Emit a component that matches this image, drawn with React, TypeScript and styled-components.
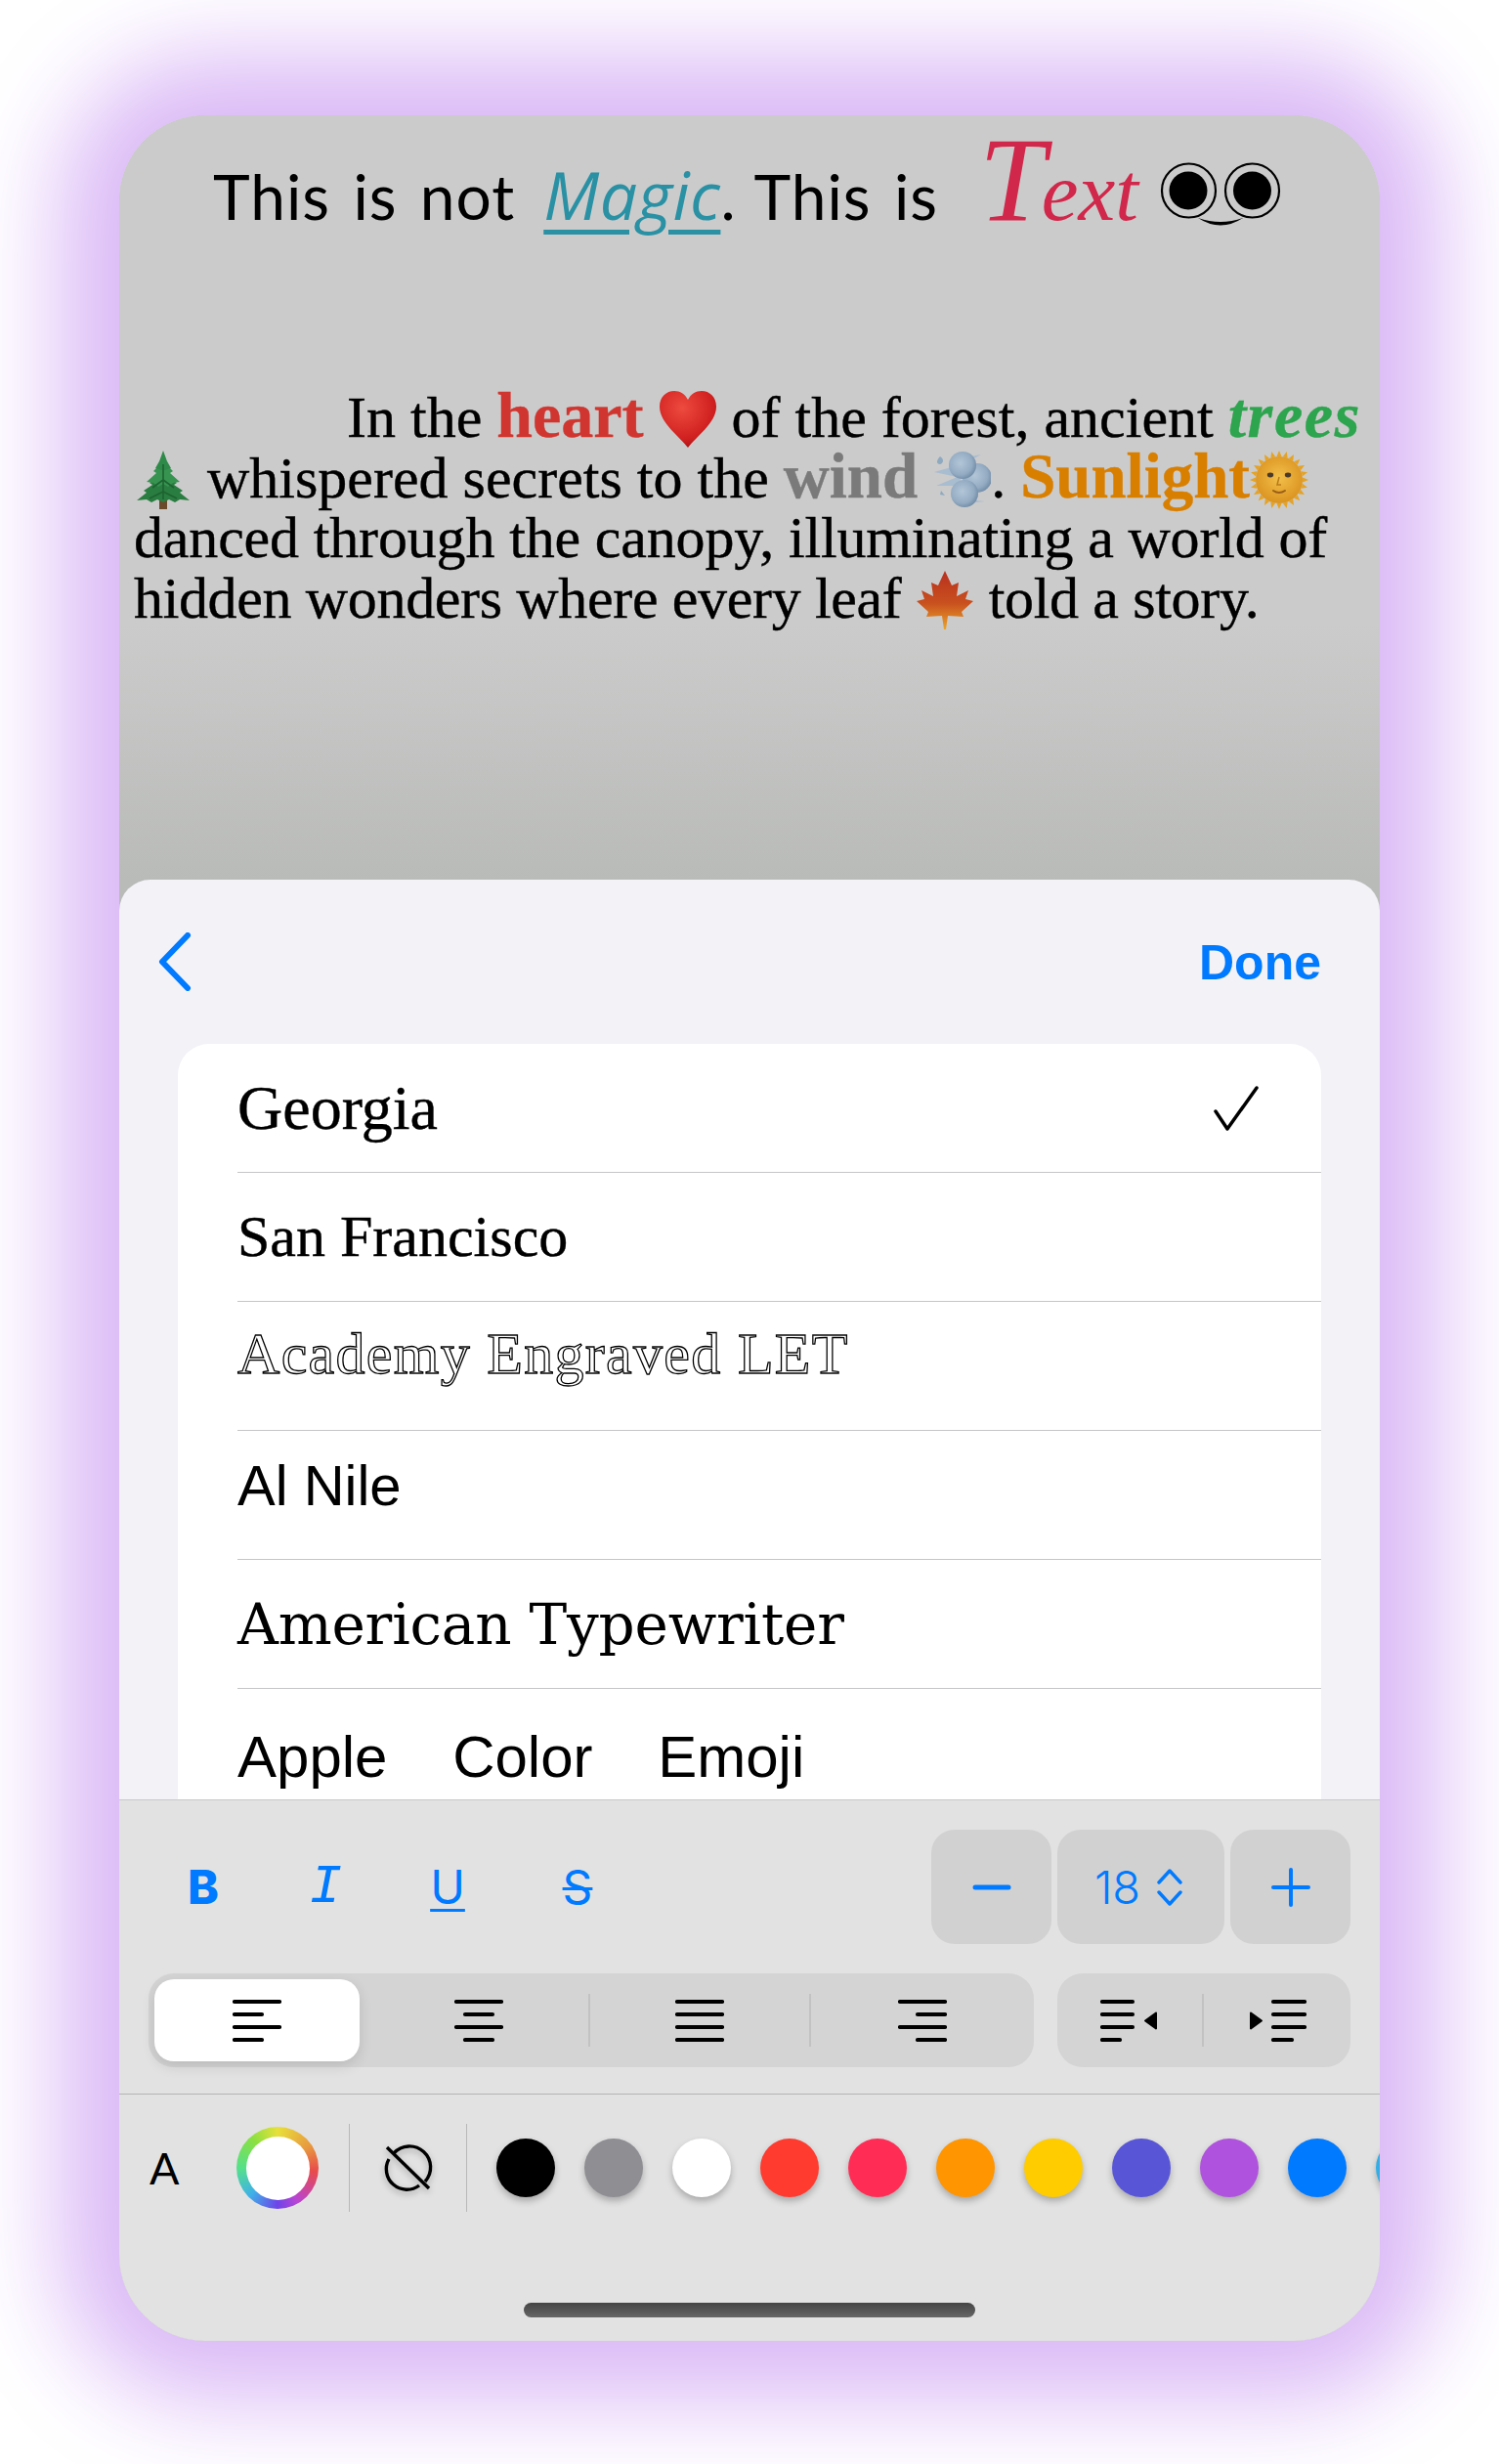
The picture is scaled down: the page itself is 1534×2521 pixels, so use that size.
import React from 'react';
import styled, { createGlobalStyle } from 'styled-components';

const GlobalStyle = createGlobalStyle`
    html, body {
        margin: 0;
        padding: 0;
        background: #ffffff;
        font-family: "Liberation Sans", Arial, sans-serif;
    }
`;

const Page = styled.div`
    width: 1534px;
    height: 2521px;
    padding: 118px 122px 0;
    box-sizing: border-box;
    overflow: hidden;
    background: #ffffff;
`;

const Phone = styled.div`
    width: 1290px;
    height: 2277px;
    border-radius: 88px;
    box-shadow: 0 0 100px 60px #dab8f6;
    display: flex;
    flex-direction: column;
`;

const Clip = styled.div`
    height: 100%;
    border-radius: 88px;
    overflow: hidden;
    background: #b9bbb8;
    display: flex;
    flex-direction: column;
`;

const Canvas = styled.div`
    height: 782px;
    flex-shrink: 0;
    box-sizing: border-box;
    padding-top: 27px;
    background: linear-gradient(180deg, #cbcbcb 0, #cbcbcb 520px, #b9bbb8 782px);
`;

const Title = styled.div`
    height: 252px;
    margin-left: 96px;
    display: flex;
    align-items: baseline;
    white-space: nowrap;
    font-family: Lato, "Liberation Sans", sans-serif;
    font-size: 64px;
    line-height: 78px;
    letter-spacing: 1px;
    word-spacing: 6px;
    color: #000000;
`;

const MagicWord = styled.span`
    margin-left: 29px;
    font-family: "Open Sans", sans-serif;
    font-style: italic;
    font-weight: 400;
    font-size: 68px;
    letter-spacing: 0.5px;
    color: #2a91a5;
    text-decoration: underline;
    text-decoration-thickness: 5px;
    text-underline-offset: 10px;
`;

const Dot = styled.span`
    margin-right: 18px;
`;

const FancyWord = styled.span`
    margin-left: 42px;
    font-family: "Liberation Serif", serif;
    font-style: italic;
    font-size: 85px;
    letter-spacing: 0;
    color: #d0274a;
`;

const FancyCap = styled.span`
    font-size: 122px;
    line-height: 78px;
    margin-right: -4px;
`;

const Eyes = styled.svg`
    width: 124px;
    height: 68px;
    margin-left: 22px;
    align-self: flex-start;
    margin-top: 21px;
`;

const Story = styled.div`
    font-family: "Liberation Serif", serif;
    font-size: 60px;
    -webkit-text-stroke-width: 0.4px;
    color: #000000;
    margin-left: 15px;
`;

const StoryLine = styled.div<{ $indent?: number; $spacing?: number }>`
    height: 61.5px;
    line-height: 61px;
    white-space: nowrap;
    padding-left: ${(p) => p.$indent ?? 0}px;
    letter-spacing: ${(p) => p.$spacing ?? 0}px;
`;

const Highlight = styled.b<{ $color: string; $size: number }>`
    color: ${(p) => p.$color};
    font-size: ${(p) => p.$size}px;
    line-height: 0;
`;

const TreesWord = styled(Highlight)`
    font-style: italic;
    letter-spacing: 1.6px;
`;

const Emoji = styled.svg`
    width: 60px;
    height: 60px;
    vertical-align: -12px;
`;

const Sheet = styled.div`
    height: 941px;
    flex-shrink: 0;
    overflow: hidden;
    background: #f2f2f7;
    border-radius: 32px 32px 0 0;
`;

const SheetHeader = styled.div`
    height: 168px;
    box-sizing: border-box;
    padding: 54px 60px 0 38px;
    display: flex;
    justify-content: space-between;
    align-items: flex-start;
`;

const BackIcon = styled.svg`
    width: 38px;
    height: 60px;
`;

const DoneLabel = styled.span`
    font-size: 50px;
    line-height: 62px;
    font-weight: 700;
    color: #007aff;
`;

const FontList = styled.div`
    margin: 0 60px;
    border-radius: 32px 32px 0 0;
    background: #ffffff;
    padding-left: 61px;
`;

// $nudge moves the label off the row's centre: positive up, negative down
const FontRow = styled.div<{ $last?: boolean; $nudge?: number }>`
    height: 132px;
    box-sizing: border-box;
    border-bottom: ${(p) => (p.$last ? 'none' : '1px solid #c6c6c8')};
    display: flex;
    align-items: center;
    justify-content: space-between;
    padding-bottom: ${(p) => Math.max(p.$nudge ?? 0, 0)}px;
    padding-top: ${(p) => Math.max(-(p.$nudge ?? 0), 0)}px;
    padding-right: 64px;
    white-space: nowrap;
    color: #000000;
`;

const GeorgiaName = styled.span`
    font-family: "Liberation Serif", serif;
    font-size: 64px;
    -webkit-text-stroke-width: 0.4px;
`;

const SanFranciscoName = styled.span`
    font-family: "Liberation Serif", serif;
    font-size: 60px;
    -webkit-text-stroke-width: 0.4px;
`;

const AcademyName = styled.span`
    font-family: "Liberation Serif", serif;
    font-size: 60px;
    letter-spacing: 1.3px;
    color: #ffffff;
    -webkit-text-stroke: 1.3px #000000;
`;

const AlNileName = styled.span`
    font-size: 58px;
`;

const TypewriterName = styled.span`
    font-family: "DejaVu Serif", serif;
    font-size: 58px;
    letter-spacing: -0.2px;
`;

const AppleName = styled.span`
    font-size: 60px;
    word-spacing: 50px;
`;

const CheckIcon = styled.svg`
    width: 46px;
    height: 46px;
`;

const Toolbar = styled.div`
    flex: 1;
    background: #e2e2e2;
    display: flex;
    flex-direction: column;
`;

const FormatPanel = styled.div`
    height: 301px;
    box-sizing: border-box;
    border-top: 1px solid #c8c8c8;
    padding: 30px 30px 0;
    display: flex;
    flex-direction: column;
    gap: 30px;
`;

const FormatRow = styled.div`
    display: flex;
    justify-content: space-between;
`;

const StyleGroup = styled.div`
    display: flex;
    gap: 13px;
    height: 117px;
`;

const StyleButton = styled.span<{ $shift?: number }>`
    width: 112px;
    margin-left: ${(p) => p.$shift ?? 0}px;
    display: flex;
    align-items: center;
    justify-content: center;
    color: #007aff;
    font-size: 48px;
    line-height: 1;
`;

const BoldLetter = styled(StyleButton)`
    font-family: Inter, sans-serif;
    font-weight: 800;
`;

const ItalicLetter = styled(StyleButton)`
    font-family: "Liberation Mono", monospace;
    font-style: italic;
    font-size: 56px;
`;

const UnderLetter = styled(StyleButton)`
    font-family: Inter, sans-serif;
    font-weight: 400;
    text-decoration: underline;
    text-decoration-thickness: 3px;
    text-underline-offset: 5px;
`;

const StrikeLetter = styled(StyleButton)`
    font-family: Inter, sans-serif;
    font-weight: 400;
    text-decoration: line-through;
    text-decoration-thickness: 3px;
`;

const SizeGroup = styled.div`
    display: flex;
    gap: 6px;
`;

const SizeButton = styled.div<{ $width: number; $trim?: number }>`
    width: ${(p) => p.$width}px;
    height: 117px;
    box-sizing: border-box;
    padding-right: ${(p) => p.$trim ?? 0}px;
    border-radius: 24px;
    background: #d1d1d1;
    display: flex;
    align-items: center;
    justify-content: center;
    gap: 17px;
    color: #007aff;
    font-family: Inter, sans-serif;
    font-weight: 300;
    font-size: 47px;
`;

const SizeIcon = styled.svg<{ $w: number; $h: number }>`
    width: ${(p) => p.$w}px;
    height: ${(p) => p.$h}px;
`;

const Segment = styled.div<{ $width: number }>`
    width: ${(p) => p.$width}px;
    height: 96px;
    box-sizing: border-box;
    border-radius: 26px;
    background: #d4d4d4;
    display: flex;
    align-items: center;
`;

const SegmentCell = styled.div<{ $width: number; $active?: boolean; $pad?: number }>`
    width: ${(p) => p.$width}px;
    height: ${(p) => (p.$active ? 84 : 54)}px;
    box-sizing: border-box;
    padding-left: ${(p) => p.$pad ?? 0}px;
    flex-shrink: 0;
    display: flex;
    align-items: center;
    justify-content: center;
    ${(p) =>
        p.$active
            ? 'margin-left: 6px; background: #ffffff; border-radius: 20px; box-shadow: 0 5px 14px rgba(0,0,0,0.12);'
            : ''}
`;

const SegmentRule = styled.div`
    width: 2px;
    height: 54px;
    flex-shrink: 0;
    background: #c2c2c2;
`;

const LinesIcon = styled.svg<{ $width: number }>`
    width: ${(p) => p.$width}px;
    height: 44px;
`;

const ColorPanel = styled.div`
    flex: 1;
    border-top: 1px solid #b4b4b4;
    display: flex;
    flex-direction: column;
`;

const ColorRow = styled.div`
    height: 90px;
    margin-top: 30px;
    display: flex;
    align-items: center;
    padding-left: 31px;
`;

const TextColorLetter = styled.span`
    width: 30px;
    flex-shrink: 0;
    font-family: Lato, sans-serif;
    font-size: 45px;
    line-height: 1;
    color: #000000;
`;

const ColorWheel = styled.div`
    width: 84px;
    height: 84px;
    flex-shrink: 0;
    margin-left: 59px;
    border-radius: 50%;
    display: flex;
    align-items: center;
    justify-content: center;
    background: conic-gradient(#e8e03a 0deg, #e89a3f 55deg, #e84b4b 95deg, #b845d4 150deg, #6e44e8 180deg, #3fb1e8 225deg, #55e08a 270deg, #8be040 320deg, #e8e03a 360deg);

    &::after {
        content: '';
        width: 65px;
        height: 65px;
        border-radius: 50%;
        background: #ffffff;
    }
`;

const RowRule = styled.div<{ $gap: number }>`
    width: 1px;
    height: 90px;
    flex-shrink: 0;
    margin-left: ${(p) => p.$gap}px;
    background: #b8b8b8;
`;

const NoColorIcon = styled.svg`
    width: 52px;
    height: 52px;
    flex-shrink: 0;
    margin-left: 33px;
    filter: drop-shadow(0 3px 3px rgba(0, 0, 0, 0.25));
`;

const Swatches = styled.div`
    display: flex;
    gap: 30px;
    margin-left: 30px;
`;

const Swatch = styled.div<{ $color: string }>`
    width: 60px;
    height: 60px;
    flex-shrink: 0;
    border-radius: 50%;
    background: ${(p) => p.$color};
    box-shadow: 0 4px 7px rgba(0, 0, 0, 0.25);
`;

const HomeBar = styled.div`
    width: 462px;
    height: 15px;
    margin: 93px auto 0;
    border-radius: 8px;
    background: linear-gradient(180deg, #444444, #666666);
`;

const swatchColors = [
    '#000000', '#8e8e93', '#ffffff', '#ff3b30', '#ff2d55', '#ff9500',
    '#ffcc00', '#5856d6', '#af52de', '#007aff', '#32ade6',
];

// x start and x end of each of the four text lines
const HorizontalLines: React.FC<{ rows: [number, number][]; width: number }> = ({ rows, width }) => (
    <LinesIcon $width={width} viewBox={`0 0 ${width} 44`}>
        {rows.map(([from, to], i) => (
            <line key={i} x1={from + 2} x2={to - 2} y1={3 + i * 13} y2={3 + i * 13} stroke="#000" strokeWidth="4.2" strokeLinecap="round" />
        ))}
    </LinesIcon>
);

const IndentLeft: React.FC = () => (
    <LinesIcon $width={60} viewBox="0 0 60 44">
        {[[0, 35], [0, 35], [0, 35], [0, 22]].map(([a, b], i) => (
            <line key={i} x1={a + 2} x2={b - 2} y1={3 + i * 13} y2={3 + i * 13} stroke="#000" strokeWidth="4.2" strokeLinecap="round" />
        ))}
        <path d="M57 14.5 L46 22.5 L57 30.5 Z" fill="#000" stroke="#000" strokeWidth="2" strokeLinejoin="round" />
    </LinesIcon>
);

const IndentRight: React.FC = () => (
    <LinesIcon $width={60} viewBox="0 0 60 44">
        {[[24, 60], [24, 60], [24, 60], [24, 47]].map(([a, b], i) => (
            <line key={i} x1={a + 2} x2={b - 2} y1={3 + i * 13} y2={3 + i * 13} stroke="#000" strokeWidth="4.2" strokeLinecap="round" />
        ))}
        <path d="M3 14.5 L14 22.5 L3 30.5 Z" fill="#000" stroke="#000" strokeWidth="2" strokeLinejoin="round" />
    </LinesIcon>
);

const HeartEmoji: React.FC = () => (
    <Emoji viewBox="0 0 60 60">
        <defs>
            <radialGradient id="heartFill" cx="0.4" cy="0.3" r="0.8">
                <stop offset="0" stopColor="#ee4b3e" />
                <stop offset="0.7" stopColor="#cf1f1f" />
                <stop offset="1" stopColor="#9a0d10" />
            </radialGradient>
        </defs>
        <path d="M30 59 C22 48 1 34 1 17 C1 7 8 1 16 1 C22 1 27 4 30 10 C33 4 38 1 44 1 C52 1 59 7 59 17 C59 34 38 48 30 59 Z" fill="url(#heartFill)" />
    </Emoji>
);

const TreeEmoji: React.FC = () => (
    <Emoji viewBox="0 0 60 60">
        <rect x="26" y="50" width="8" height="10" fill="#6b4a2b" />
        <path d="M30 24 L44 33 L41 35 L50 41 L47 43 L57 51 L47 50 L42 53 L36 50 L30 53 L24 50 L18 53 L13 50 L3 51 L13 43 L10 41 L19 35 L16 33 Z" fill="#2a7d40" />
        <path d="M30 11 L40 21 L37 23 L47 32 L40 33 L35 37 L30 34 L25 37 L20 33 L13 32 L23 23 L20 21 Z" fill="#379450" />
        <path d="M30 0 L34 11 L38 18 L32 20 L28 20 L22 18 L26 11 Z" fill="#2e8a49" />
        <path d="M30 14 L30 50 M30 30 L19 38 M30 30 L41 38 M30 42 L16 49 M30 42 L44 49" stroke="#1d6331" strokeWidth="1.6" fill="none" />
    </Emoji>
);

const WindEmoji: React.FC = () => (
    <Emoji viewBox="0 0 60 60">
        <defs>
            <radialGradient id="windFill" cx="0.42" cy="0.42" r="0.62">
                <stop offset="0" stopColor="#b3c6d8" />
                <stop offset="0.7" stopColor="#93abc2" />
                <stop offset="1" stopColor="#6f8aa5" />
            </radialGradient>
        </defs>
        <path d="M30 14 L2 22 L30 28 Z M28 26 L4 36 L30 36 Z M30 8 L50 4 L32 14 Z M36 50 L54 52 L36 54 Z" fill="#a9bdd0" />
        <circle cx="46" cy="28" r="15" fill="url(#windFill)" />
        <circle cx="33" cy="44" r="14" fill="url(#windFill)" />
        <circle cx="31" cy="15" r="14" fill="url(#windFill)" />
        <path d="M8 6 C12 8 12 13 8 14 C4 14 4 10 8 6 Z M9 41 L13 46 L8 45 Z" fill="#8fa9c0" />
    </Emoji>
);

const SunEmoji: React.FC = () => {
    const rays = Array.from({ length: 24 }, (_, i) => i * 15);
    return (
        <Emoji viewBox="0 0 60 60">
            <defs>
                <radialGradient id="sunFill" cx="0.5" cy="0.45" r="0.6">
                    <stop offset="0" stopColor="#f2c04a" />
                    <stop offset="1" stopColor="#d98f1c" />
                </radialGradient>
            </defs>
            {rays.map((a) => (
                <path key={a} d="M27.5 6 L30 0 L32.5 6 Z" fill="#e5a324" transform={`rotate(${a} 30 30)`} />
            ))}
            <circle cx="30" cy="30" r="24" fill="url(#sunFill)" />
            <ellipse cx="21" cy="25" rx="3.2" ry="2.4" fill="#4a3a2a" />
            <ellipse cx="39" cy="25" rx="3.2" ry="2.4" fill="#4a3a2a" />
            <path d="M30 27 L28 35 L32 35" stroke="#b97a1a" strokeWidth="1.5" fill="none" />
            <path d="M24 41 Q30 45 36 41" stroke="#9a5e16" strokeWidth="2" fill="none" strokeLinecap="round" />
        </Emoji>
    );
};

const LeafEmoji: React.FC = () => (
    <Emoji viewBox="0 0 60 60">
        <defs>
            <linearGradient id="leafFill" x1="0" y1="0" x2="0" y2="1">
                <stop offset="0" stopColor="#b8301f" />
                <stop offset="0.55" stopColor="#c9501e" />
                <stop offset="1" stopColor="#eaa52a" />
            </linearGradient>
        </defs>
        <path d="M30 0 L37 15 L44 12 L42 26 L54 20 L51 29 L59 31 L47 42 L49 47 L33 46 L31 60 L29 60 L27 46 L11 47 L13 42 L1 31 L9 29 L6 20 L18 26 L16 12 L23 15 Z" fill="url(#leafFill)" />
    </Emoji>
);

const App: React.FC = () => {
    return (
        <Page>
            <GlobalStyle />
            <Phone>
                <Clip>
                    <Canvas>
                        <Title>
                            <span>This is not</span>
                            <MagicWord>Magic</MagicWord>
                            <Dot>.</Dot>
                            <span>This is</span>
                            <FancyWord><FancyCap>T</FancyCap>ext</FancyWord>
                            <Eyes viewBox="0 0 124 68">
                                <circle cx="29.5" cy="29" r="27.5" fill="none" stroke="#000" strokeWidth="2.2" />
                                <circle cx="29" cy="29" r="19.5" fill="#000" />
                                <circle cx="94.5" cy="29" r="27.5" fill="none" stroke="#000" strokeWidth="2.2" />
                                <circle cx="94.5" cy="29" r="19.5" fill="#000" />
                                <path d="M39 57 Q62 72 85 57 Q62 65 39 57 Z" fill="#000" />
                            </Eyes>
                        </Title>
                        <Story>
                            <StoryLine $indent={218}>In the <Highlight $color="#d0352f" $size={66}>heart</Highlight> <HeartEmoji /> of the forest, ancient <TreesWord $color="#2da44e" $size={66}>trees</TreesWord></StoryLine>
                            <StoryLine><TreeEmoji /> whispered secrets to the <Highlight $color="#7a7a7a" $size={65}>wind</Highlight> <WindEmoji />. <Highlight $color="#d97f00" $size={65}>Sunlight</Highlight><SunEmoji /></StoryLine>
                            <StoryLine $spacing={-0.16}>danced through the canopy, illuminating a world of</StoryLine>
                            <StoryLine $spacing={-0.35}>hidden wonders where every leaf <LeafEmoji /> told a story.</StoryLine>
                        </Story>
                    </Canvas>
                    <Sheet>
                        <SheetHeader>
                            <BackIcon viewBox="0 0 38 60">
                                <path d="M32 3 L6 30 L32 57" fill="none" stroke="#007aff" strokeWidth="6" strokeLinecap="round" strokeLinejoin="round" />
                            </BackIcon>
                            <DoneLabel>Done</DoneLabel>
                        </SheetHeader>
                        <FontList>
                            <FontRow>
                                <GeorgiaName>Georgia</GeorgiaName>
                                <CheckIcon viewBox="0 0 46 46">
                                    <path d="M2 26 L14 44 L44 2" fill="none" stroke="#000" strokeWidth="3.5" strokeLinecap="round" strokeLinejoin="round" />
                                </CheckIcon>
                            </FontRow>
                            <FontRow><SanFranciscoName>San Francisco</SanFranciscoName></FontRow>
                            <FontRow $nudge={24}><AcademyName>Academy Engraved LET</AcademyName></FontRow>
                            <FontRow $nudge={20}><AlNileName>Al Nile</AlNileName></FontRow>
                            <FontRow><TypewriterName>American Typewriter</TypewriterName></FontRow>
                            <FontRow $last $nudge={-6}><AppleName>Apple Color Emoji</AppleName></FontRow>
                        </FontList>
                    </Sheet>
                    <Toolbar>
                        <FormatPanel>
                            <FormatRow>
                                <StyleGroup>
                                    <BoldLetter>B</BoldLetter>
                                    <ItalicLetter>I</ItalicLetter>
                                    <UnderLetter>U</UnderLetter>
                                    <StrikeLetter $shift={8}>S</StrikeLetter>
                                </StyleGroup>
                                <SizeGroup>
                                    <SizeButton $width={123}>
                                        <SizeIcon $w={40} $h={6} viewBox="0 0 40 6">
                                            <line x1="3" y1="3" x2="37" y2="3" stroke="#007aff" strokeWidth="5" strokeLinecap="round" />
                                        </SizeIcon>
                                    </SizeButton>
                                    <SizeButton $width={171} $trim={5}>
                                        <span>18</span>
                                        <SizeIcon $w={26} $h={38} viewBox="0 0 26 38">
                                            <path d="M2 14 L13 2 L24 14 M2 24 L13 36 L24 24" fill="none" stroke="#007aff" strokeWidth="3.4" strokeLinecap="round" strokeLinejoin="round" />
                                        </SizeIcon>
                                    </SizeButton>
                                    <SizeButton $width={123}>
                                        <SizeIcon $w={40} $h={40} viewBox="0 0 40 40">
                                            <path d="M20 2 L20 38 M2 20 L38 20" fill="none" stroke="#007aff" strokeWidth="4" strokeLinecap="round" />
                                        </SizeIcon>
                                    </SizeButton>
                                </SizeGroup>
                            </FormatRow>
                            <FormatRow>
                                <Segment $width={906}>
                                    <SegmentCell $width={210} $active>
                                        <HorizontalLines width={50} rows={[[0, 50], [0, 32], [0, 50], [0, 32]]} />
                                    </SegmentCell>
                                    <SegmentCell $width={234} $pad={10}>
                                        <HorizontalLines width={50} rows={[[0, 50], [9, 41], [0, 50], [9, 41]]} />
                                    </SegmentCell>
                                    <SegmentRule />
                                    <SegmentCell $width={224}>
                                        <HorizontalLines width={50} rows={[[0, 50], [0, 50], [0, 50], [0, 50]]} />
                                    </SegmentCell>
                                    <SegmentRule />
                                    <SegmentCell $width={228}>
                                        <HorizontalLines width={50} rows={[[0, 50], [18, 50], [0, 50], [18, 50]]} />
                                    </SegmentCell>
                                </Segment>
                                <Segment $width={300}>
                                    <SegmentCell $width={148}><IndentLeft /></SegmentCell>
                                    <SegmentRule />
                                    <SegmentCell $width={150}><IndentRight /></SegmentCell>
                                </Segment>
                            </FormatRow>
                        </FormatPanel>
                        <ColorPanel>
                            <ColorRow>
                                <TextColorLetter>A</TextColorLetter>
                                <ColorWheel />
                                <RowRule $gap={31} />
                                <NoColorIcon viewBox="0 0 52 52">
                                    <path d="M12 11 A21 21 0 0 1 44 40 M38 44 A21 21 0 0 1 7 17" fill="none" stroke="#000" strokeWidth="3.4" />
                                    <line x1="5" y1="5" x2="48" y2="47" stroke="#000" strokeWidth="3.4" />
                                </NoColorIcon>
                                <RowRule $gap={34} />
                                <Swatches>
                                    {swatchColors.map((color) => (
                                        <Swatch key={color} $color={color} />
                                    ))}
                                </Swatches>
                            </ColorRow>
                            <HomeBar />
                        </ColorPanel>
                    </Toolbar>
                </Clip>
            </Phone>
        </Page>
    );
};

export default App;
